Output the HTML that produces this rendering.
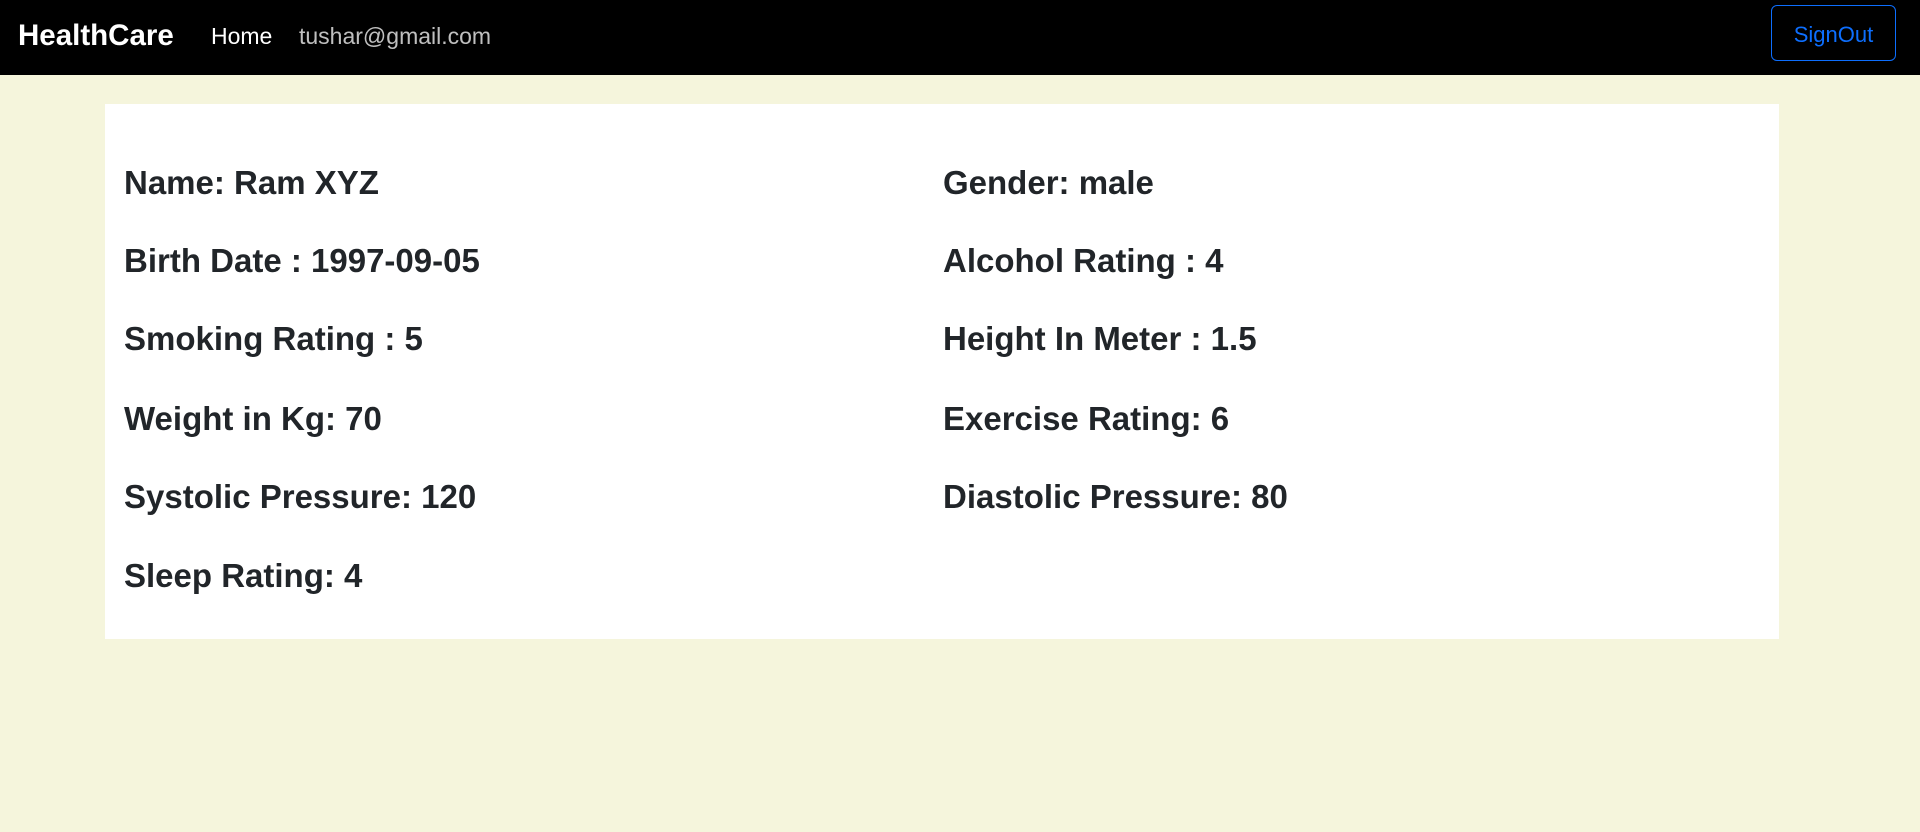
<!DOCTYPE html>
<html><head><meta charset="utf-8"><style>
*{box-sizing:border-box;margin:0;padding:0}
body{width:1920px;height:832px;background:#f5f5dc;font-family:"Liberation Sans",sans-serif;color:#212529;overflow:hidden}
nav{height:75px;background:#000;position:relative}
.brand{position:absolute;left:18px;top:19px;color:#fff;font-weight:bold;font-size:29.5px}
.home{position:absolute;left:211px;top:23px;color:#fff;font-size:23px}
.mail{position:absolute;left:299px;top:23px;color:rgba(255,255,255,.75);font-size:23px}
.btn{position:absolute;left:1771px;top:5px;width:125px;height:56px;border:1px solid #0d6efd;border-radius:6px;color:#0d6efd;font-size:22px;display:flex;align-items:center;justify-content:center;padding-top:4px}
.card{position:absolute;left:105px;top:104px;width:1674px;height:535px;background:#fff}
.row{position:absolute;font-size:33px;line-height:40px;font-weight:bold}
</style></head><body>
<nav><div class="brand">HealthCare</div><div class="home">Home</div><div class="mail">tushar@gmail.com</div><div class="btn">SignOut</div></nav>
<div class="card"></div>
<div class="row" style="left:124px;top:163px">Name: Ram XYZ</div>
<div class="row" style="left:943px;top:163px">Gender: male</div>
<div class="row" style="left:124px;top:241px">Birth Date : 1997-09-05</div>
<div class="row" style="left:943px;top:241px">Alcohol Rating : 4</div>
<div class="row" style="left:124px;top:319px">Smoking Rating : 5</div>
<div class="row" style="left:943px;top:319px">Height In Meter : 1.5</div>
<div class="row" style="left:124px;top:399px">Weight in Kg: 70</div>
<div class="row" style="left:943px;top:399px">Exercise Rating: 6</div>
<div class="row" style="left:124px;top:477px">Systolic Pressure: 120</div>
<div class="row" style="left:943px;top:477px">Diastolic Pressure: 80</div>
<div class="row" style="left:124px;top:556px">Sleep Rating: 4</div>
</body></html>
